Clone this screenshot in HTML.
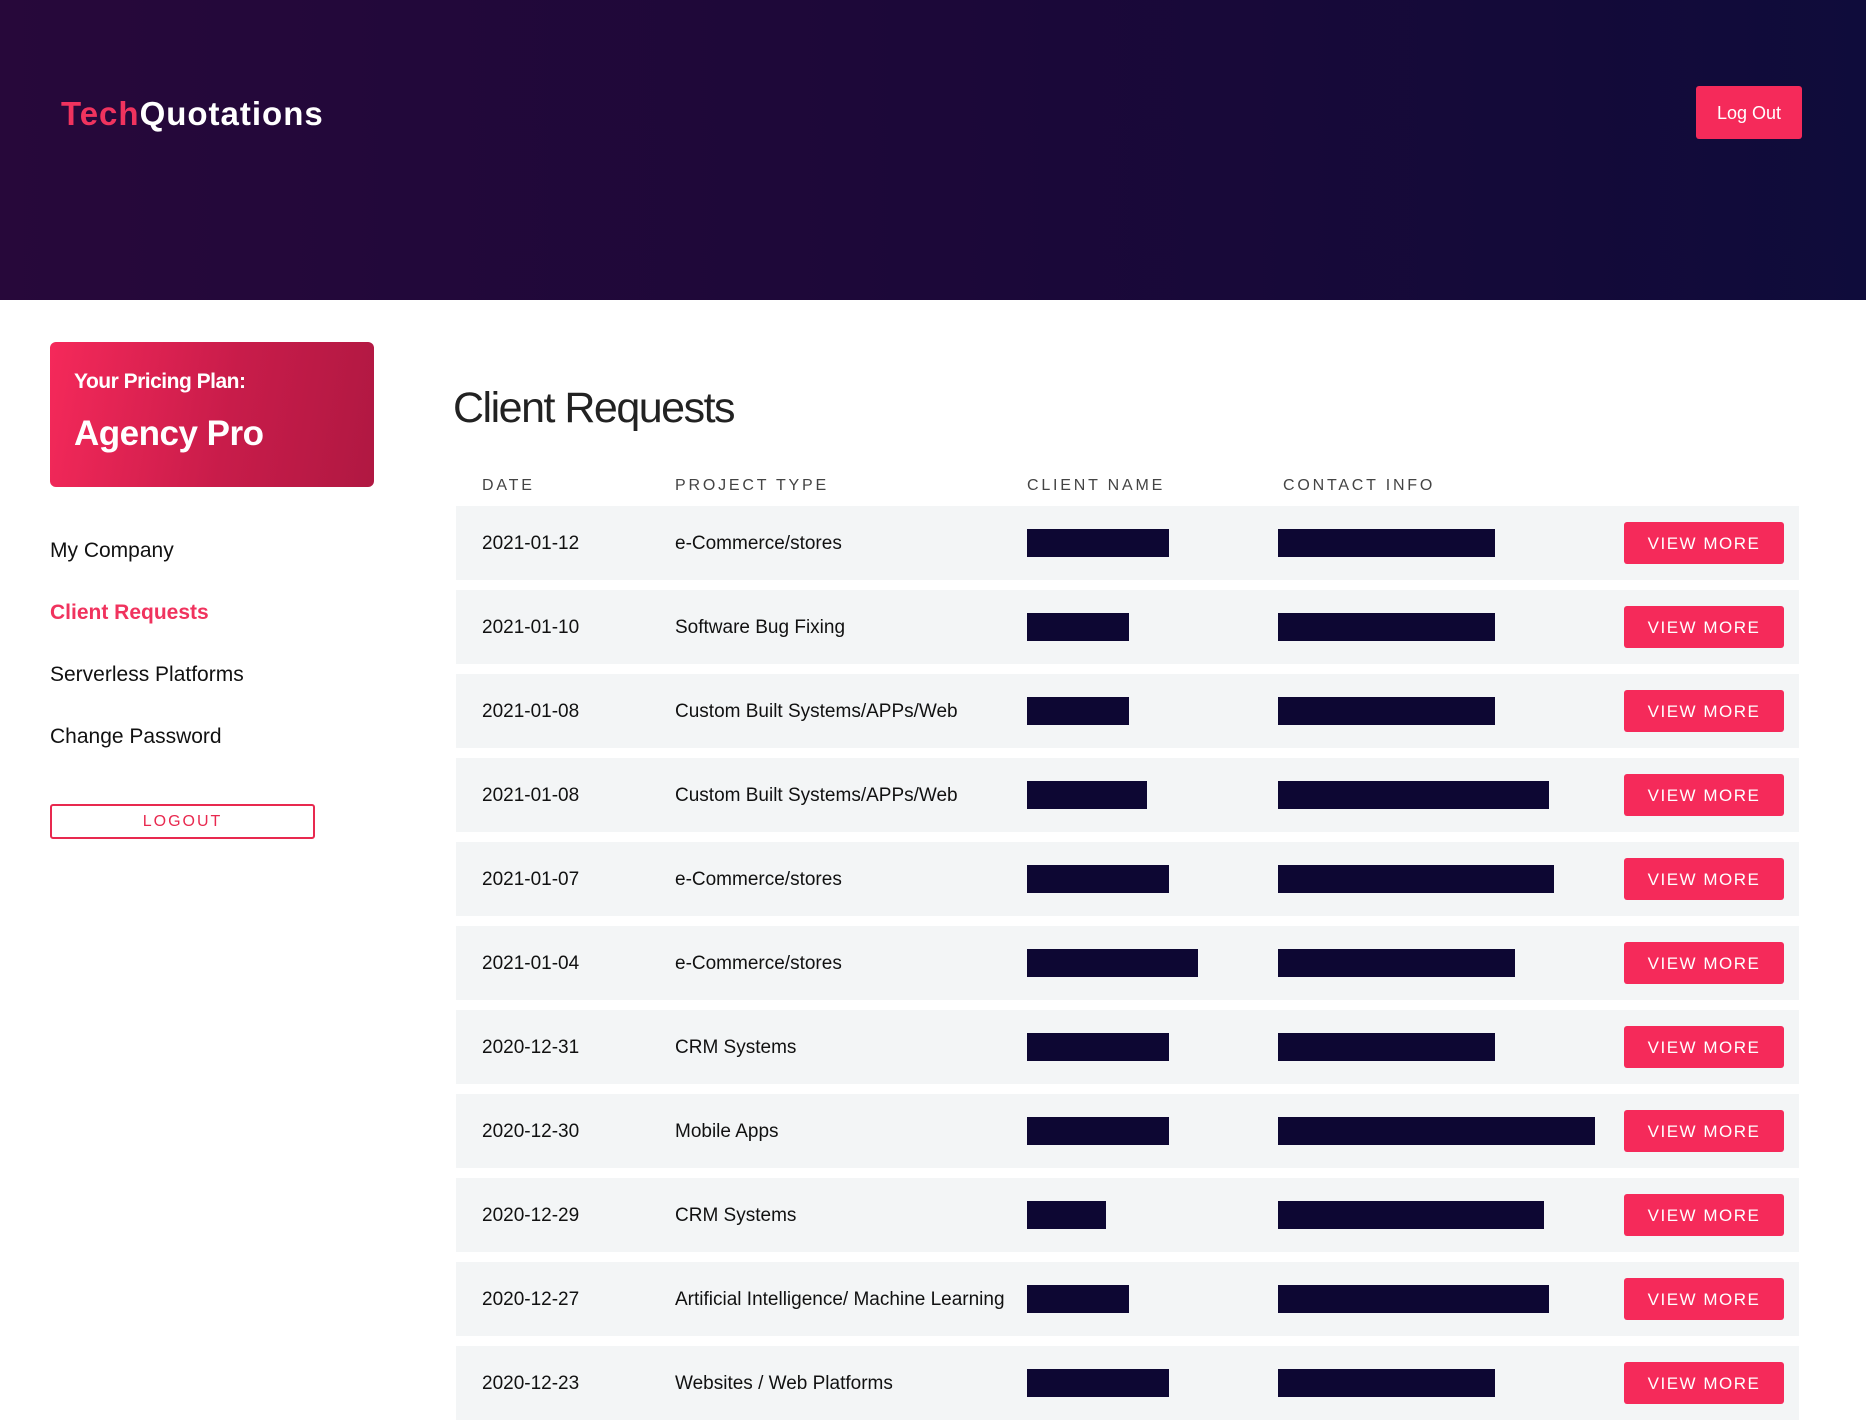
<!DOCTYPE html>
<html><head><meta charset="utf-8"><style>
*{margin:0;padding:0;box-sizing:border-box}
body{width:1866px;height:1390px;overflow:hidden;background:#fff;font-family:"Liberation Sans",sans-serif;position:relative}
.hdr{position:absolute;left:0;top:0;width:1866px;height:300px;background:linear-gradient(90deg,#27083a 0%,#1c0839 50%,#130a39 85%,#0f0c3b 100%)}
.logo{position:absolute;left:61px;top:95px;font-size:33px;font-weight:bold;color:#fff;letter-spacing:1px}
.logo span{color:#f0335e}
.lo{position:absolute;left:1696px;top:86px;width:106px;height:53px;background:#f52a5a;color:#fff;border-radius:3px;font-size:18px;text-align:center;line-height:55px}
.card{position:absolute;left:50px;top:342px;width:324px;height:145px;border-radius:6px;background:linear-gradient(100deg,#f5295a 0%,#c81c4a 55%,#b01842 100%);color:#fff}
.card .a{position:absolute;left:24px;top:28px;font-size:21px;font-weight:bold;letter-spacing:-.5px}
.card .b{position:absolute;left:24px;top:72px;font-size:35px;font-weight:bold;letter-spacing:-.5px}
.nav{position:absolute;left:50px;font-size:21px;color:#111}
.lg{position:absolute;left:50px;top:804px;width:265px;height:35px;border:2px solid #e8294f;border-radius:3px;color:#e8294f;font-size:16px;text-align:center;line-height:31px;letter-spacing:2px}
h1{position:absolute;left:453px;top:384px;font-size:43px;font-weight:normal;color:#222;letter-spacing:-1.5px}
.th{position:absolute;top:477px;font-size:16px;color:#444;letter-spacing:2.8px}
.row{position:absolute;left:456px;width:1343px;height:74px;background:#f3f5f6}
.row .t{position:absolute;top:27px;font-size:19px;color:#111}
.bar{position:absolute;top:23px;height:28px;background:#0d0733}
.vm{position:absolute;left:1168px;top:16px;width:160px;height:42px;background:#f52a5a;border-radius:3px;color:#fff;font-size:17px;letter-spacing:1.5px;text-align:center;line-height:44px}
</style></head><body>
<div class="hdr"><div class="logo"><span>Tech</span>Quotations</div><div class="lo">Log Out</div></div>
<div class="card"><div class="a">Your Pricing Plan:</div><div class="b">Agency Pro</div></div>
<div class="nav" style="top:539px">My Company</div>
<div class="nav" style="top:601px;color:#f0335e;font-weight:bold">Client Requests</div>
<div class="nav" style="top:663px">Serverless Platforms</div>
<div class="nav" style="top:725px">Change Password</div>
<div class="lg">LOGOUT</div>
<h1>Client Requests</h1>
<div class="th" style="left:482px">DATE</div>
<div class="th" style="left:675px">PROJECT TYPE</div>
<div class="th" style="left:1027px">CLIENT NAME</div>
<div class="th" style="left:1283px">CONTACT INFO</div>
<div class="row" style="top:506px"><div class="t" style="left:26px">2021-01-12</div><div class="t" style="left:219px">e-Commerce/stores</div><div class="bar" style="left:571px;width:142px"></div><div class="bar" style="left:822px;width:217px"></div><div class="vm">VIEW MORE</div></div>
<div class="row" style="top:590px"><div class="t" style="left:26px">2021-01-10</div><div class="t" style="left:219px">Software Bug Fixing</div><div class="bar" style="left:571px;width:102px"></div><div class="bar" style="left:822px;width:217px"></div><div class="vm">VIEW MORE</div></div>
<div class="row" style="top:674px"><div class="t" style="left:26px">2021-01-08</div><div class="t" style="left:219px">Custom Built Systems/APPs/Web</div><div class="bar" style="left:571px;width:102px"></div><div class="bar" style="left:822px;width:217px"></div><div class="vm">VIEW MORE</div></div>
<div class="row" style="top:758px"><div class="t" style="left:26px">2021-01-08</div><div class="t" style="left:219px">Custom Built Systems/APPs/Web</div><div class="bar" style="left:571px;width:120px"></div><div class="bar" style="left:822px;width:271px"></div><div class="vm">VIEW MORE</div></div>
<div class="row" style="top:842px"><div class="t" style="left:26px">2021-01-07</div><div class="t" style="left:219px">e-Commerce/stores</div><div class="bar" style="left:571px;width:142px"></div><div class="bar" style="left:822px;width:276px"></div><div class="vm">VIEW MORE</div></div>
<div class="row" style="top:926px"><div class="t" style="left:26px">2021-01-04</div><div class="t" style="left:219px">e-Commerce/stores</div><div class="bar" style="left:571px;width:171px"></div><div class="bar" style="left:822px;width:237px"></div><div class="vm">VIEW MORE</div></div>
<div class="row" style="top:1010px"><div class="t" style="left:26px">2020-12-31</div><div class="t" style="left:219px">CRM Systems</div><div class="bar" style="left:571px;width:142px"></div><div class="bar" style="left:822px;width:217px"></div><div class="vm">VIEW MORE</div></div>
<div class="row" style="top:1094px"><div class="t" style="left:26px">2020-12-30</div><div class="t" style="left:219px">Mobile Apps</div><div class="bar" style="left:571px;width:142px"></div><div class="bar" style="left:822px;width:317px"></div><div class="vm">VIEW MORE</div></div>
<div class="row" style="top:1178px"><div class="t" style="left:26px">2020-12-29</div><div class="t" style="left:219px">CRM Systems</div><div class="bar" style="left:571px;width:79px"></div><div class="bar" style="left:822px;width:266px"></div><div class="vm">VIEW MORE</div></div>
<div class="row" style="top:1262px"><div class="t" style="left:26px">2020-12-27</div><div class="t" style="left:219px">Artificial Intelligence/ Machine Learning</div><div class="bar" style="left:571px;width:102px"></div><div class="bar" style="left:822px;width:271px"></div><div class="vm">VIEW MORE</div></div>
<div class="row" style="top:1346px"><div class="t" style="left:26px">2020-12-23</div><div class="t" style="left:219px">Websites / Web Platforms</div><div class="bar" style="left:571px;width:142px"></div><div class="bar" style="left:822px;width:217px"></div><div class="vm">VIEW MORE</div></div>
</body></html>
